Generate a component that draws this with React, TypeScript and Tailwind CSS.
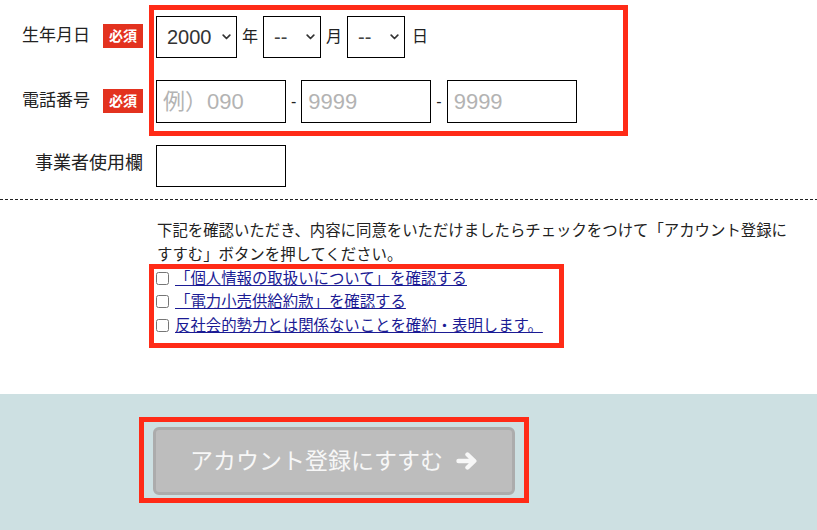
import React from "react";

function Chevron() {
  return (
    <svg
      className="pointer-events-none absolute right-[6px] top-1/2 -translate-y-1/2"
      width="9"
      height="6"
      viewBox="0 0 9 6"
    >
      <path
        d="M1.2 1.2l3.3 3.3 3.3-3.3"
        stroke="#333"
        strokeWidth="1.7"
        fill="none"
        strokeLinecap="round"
        strokeLinejoin="round"
      />
    </svg>
  );
}

function Badge() {
  return (
    <span className="ml-[13px] inline-flex h-[24px] w-[40px] items-center justify-center bg-[#e3321f] text-[14px] font-bold leading-none text-white">
      必須
    </span>
  );
}

function Arrow() {
  return (
    <svg width="22" height="18" viewBox="0 0 22 18" className="shrink-0">
      <path
        d="M2.5 9h15.5M11.5 2.5l6.8 6.5-6.8 6.5"
        stroke="#f7f7f7"
        strokeWidth="4.4"
        fill="none"
        strokeLinecap="round"
        strokeLinejoin="round"
      />
    </svg>
  );
}

export default function App() {
  return (
    <div className="w-[817px] bg-white font-['Liberation_Sans','Noto_Sans_CJK_JP',sans-serif] text-[#222]">
      {/* Section A */}
      <div className="flex pt-[5px]">
        <div className="flex w-[143px] shrink-0 flex-col gap-[22px] pt-[11px]">
          <div className="flex h-[42px] items-center pb-[3px] pl-[22px] text-[17px]">
            <span>生年月日</span>
            <Badge />
          </div>
          <div className="flex h-[43px] items-center pb-[1px] pl-[22px] text-[17px]">
            <span>電話番号</span>
            <Badge />
          </div>
        </div>
        <div className="ml-[6px] flex w-[479px] flex-col gap-[22px] border-[5px] border-[#ff2b17] pb-[8px] pl-[2px] pt-[6px]">
          <div className="flex h-[42px] items-center gap-[5px] text-[16px]">
            <div className="relative h-[42px] w-[81px]">
              <select
                defaultValue="2000"
                className="h-full w-full appearance-none rounded-none border border-black bg-white pl-[10px] text-[20px] text-[#333] outline-none"
              >
                <option value="2000">2000</option>
              </select>
              <Chevron />
            </div>
            <span>年</span>
            <div className="relative h-[42px] w-[58px]">
              <select
                defaultValue="--"
                className="h-full w-full appearance-none rounded-none border border-black bg-white pl-[10px] text-[20px] text-[#444] outline-none"
              >
                <option value="--">--</option>
              </select>
              <Chevron />
            </div>
            <span>月</span>
            <div className="relative h-[42px] w-[58px]">
              <select
                defaultValue="--"
                className="h-full w-full appearance-none rounded-none border border-black bg-white pl-[10px] text-[20px] text-[#444] outline-none"
              >
                <option value="--">--</option>
              </select>
              <Chevron />
            </div>
            <span className="ml-[2px]">日</span>
          </div>
          <div className="flex h-[43px] items-center gap-[5px] text-[16px]">
            <input
              placeholder="例）090"
              className="h-[43px] w-[130px] border border-black pl-[6px] text-[22px] outline-none placeholder:text-[#b3b3b3]"
            />
            <span>-</span>
            <input
              placeholder="9999"
              className="h-[43px] w-[130px] border border-black pl-[6px] text-[22px] outline-none placeholder:text-[#b3b3b3]"
            />
            <span>-</span>
            <input
              placeholder="9999"
              className="h-[43px] w-[130px] border border-black pl-[6px] text-[22px] outline-none placeholder:text-[#b3b3b3]"
            />
          </div>
        </div>
      </div>

      {/* Section B */}
      <div className="mt-[9px] flex items-center">
        <div className="w-[143px] shrink-0 pb-[5px] text-right text-[18px]">事業者使用欄</div>
        <input className="ml-[13px] h-[42px] w-[130px] border border-black outline-none" />
      </div>

      {/* dashed divider */}
      <div className="mt-[12px] h-px w-full bg-[linear-gradient(to_right,#222_60%,transparent_60%)] bg-[length:5px_1px]" />

      {/* Agreement */}
      <p className="ml-[157px] mt-[19px] w-[640px] text-[15.4px] leading-[24px] text-[#222]">
        下記を確認いただき、内容に同意をいただけましたらチェックをつけて「アカウント登録にすすむ」ボタンを押してください。
      </p>
      <div className="relative ml-[156px] flex flex-col text-[15.4px]">
        <div className="pointer-events-none absolute left-[-7px] top-[-3px] h-[84px] w-[415px] border-[5px] border-[#ff2b17]" />
        {[
          "「個人情報の取扱いについて」を確認する",
          "「電力小売供給約款」を確認する",
          "反社会的勢力とは関係ないことを確約・表明します。",
        ].map((t) => (
          <label key={t} className="flex h-[23.3px] items-center gap-[6px]">
            <input type="checkbox" className="m-0 h-[13px] w-[13px]" />
            <a href="#" className="text-[#1b1b94] underline">
              {t}
            </a>
          </label>
        ))}
      </div>

      {/* Bottom section */}
      <div className="mt-[57px] bg-[#cde0e2] pb-[28px] pl-[139px] pt-[23px]">
        <div className="w-[390px] border-[5px] border-[#ff2b17] px-[9px] pb-[3px] pt-[5px]">
          <button className="flex h-[68px] w-full items-center justify-center gap-[13px] rounded-[6px] border-[3px] border-[#acacac] bg-[#bdbdbd] text-[23px] text-[#f7f7f7]">
            <span>アカウント登録にすすむ</span>
            <Arrow />
          </button>
        </div>
      </div>
    </div>
  );
}
